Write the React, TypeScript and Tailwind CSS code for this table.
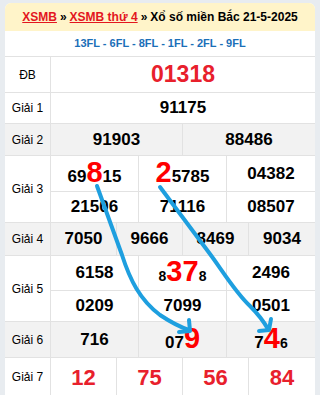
import type { ReactNode } from "react";

const font = { fontFamily: '"Liberation Sans", Arial, sans-serif' };

function Hi({ children }: { children: ReactNode }) {
  return <span className="text-[29px] leading-none text-[#ff0000]">{children}</span>;
}

function Sm({ children }: { children: ReactNode }) {
  return <span className="text-[14px]">{children}</span>;
}

function Row({ label, gray, h, children }: { label: string; gray?: boolean; h: string; children: ReactNode }) {
  return (
    <div className={`flex border-b border-[#e2e2e2] ${gray ? "bg-[#f2f2f2]" : "bg-white"}`}>
      <div className={`w-[46px] shrink-0 flex items-center justify-center border-r border-[#e2e2e2] text-[12px] text-black ${h}`}>
        {label}
      </div>
      <div className="flex-1 flex flex-col">{children}</div>
    </div>
  );
}

function Cells({ items, cols, h, last }: { items: ReactNode[]; cols: string; h: string; last?: boolean }) {
  return (
    <div className={`grid ${cols} ${last ? "" : "border-b border-[#e2e2e2]"}`}>
      {items.map((it, i) => (
        <div
          key={i}
          className={`flex items-center justify-center font-bold text-[17px] text-black ${h} ${i < items.length - 1 ? "border-r border-[#e2e2e2]" : ""}`}
        >
          {it}
        </div>
      ))}
    </div>
  );
}

export default function App() {
  return (
    <div className="relative w-[320px] h-[395px] overflow-hidden bg-[#e8ecf0] px-[5px] pt-[3px]" style={font}>
      <div className="bg-white rounded-t-[6px] overflow-hidden">
        {/* header */}
        <div className="h-[28px] bg-[#fff4c9] flex items-center justify-center text-[12px] font-bold text-black whitespace-nowrap">
          <span className="text-[#e3161e] underline">XSMB</span>
          <span className="mx-[3px]">»</span>
          <span className="text-[#e3161e] underline">XSMB thứ 4</span>
          <span className="mx-[3px]">»</span>
          <span>Xổ số miền Bắc 21-5-2025</span>
        </div>
        <div className="h-[26px] flex items-center justify-center border-b border-[#e2e2e2] text-[11px] font-bold text-[#1b6fb8]">
          13FL - 6FL - 8FL - 1FL - 2FL - 9FL
        </div>

        <Row label="ĐB" h="h-[35px]">
          <div className="h-[35px] flex items-center justify-center text-[23px] font-bold text-[#e8202c]">01318</div>
        </Row>
        <Row label="Giải 1" h="h-[30px]">
          <Cells items={["91175"]} cols="grid-cols-1" h="h-[30px]" last />
        </Row>
        <Row label="Giải 2" gray h="h-[31px]">
          <Cells items={["91903", "88486"]} cols="grid-cols-2" h="h-[31px]" last />
        </Row>
        <Row label="Giải 3" h="h-[66px]">
          <Cells
            items={[
              <span>69<Hi>8</Hi>15</span>,
              <span><Hi>2</Hi>5785</span>,
              "04382",
            ]}
            cols="grid-cols-3"
            h="h-[35px]"
          />
          <Cells items={["21506", "71116", "08507"]} cols="grid-cols-3" h="h-[30px]" last />
        </Row>
        <Row label="Giải 4" gray h="h-[32px]">
          <Cells items={["7050", "9666", "8469", "9034"]} cols="grid-cols-4" h="h-[32px]" last />
        </Row>
        <Row label="Giải 5" h="h-[65px]">
          <Cells
            items={["6158", <span><Sm>8</Sm><Hi>37</Hi><Sm>8</Sm></span>, "2496"]}
            cols="grid-cols-3"
            h="h-[34px]"
          />
          <Cells items={["0209", "7099", "0501"]} cols="grid-cols-3" h="h-[30px]" last />
        </Row>
        <Row label="Giải 6" gray h="h-[35px]">
          <Cells
            items={["716", <span>07<Hi>9</Hi></span>, <span>7<Hi>4</Hi><Sm>6</Sm></span>]}
            cols="grid-cols-3"
            h="h-[35px]"
            last
          />
        </Row>
        <Row label="Giải 7" h="h-[38px]">
          <div className="grid grid-cols-4">
            {["12", "75", "56", "84"].map((n, i) => (
              <div
                key={n}
                className={`h-[38px] flex items-center justify-center text-[22px] font-bold text-[#e8202c] ${i < 3 ? "border-r border-[#e2e2e2]" : ""}`}
              >
                {n}
              </div>
            ))}
          </div>
        </Row>
      </div>

      {/* arrows */}
      <svg className="absolute left-0 top-0 pointer-events-none" width="320" height="395" viewBox="0 0 320 395" fill="none">
        <g stroke="#1e9fdf" strokeWidth="4" strokeLinecap="round" strokeLinejoin="round">
          <path d="M97 186 L122 255 C130 280 140 300 160 315 C172 323 180 327 189 330" />
          <path d="M189 320 L190 331 L179 332" />
          <path d="M160 187 L210 254 C222 270 235 292 250 306 C258 314 264 322 268 329" />
          <path d="M271 319 L269 330 L259 331" />
        </g>
      </svg>
    </div>
  );
}
